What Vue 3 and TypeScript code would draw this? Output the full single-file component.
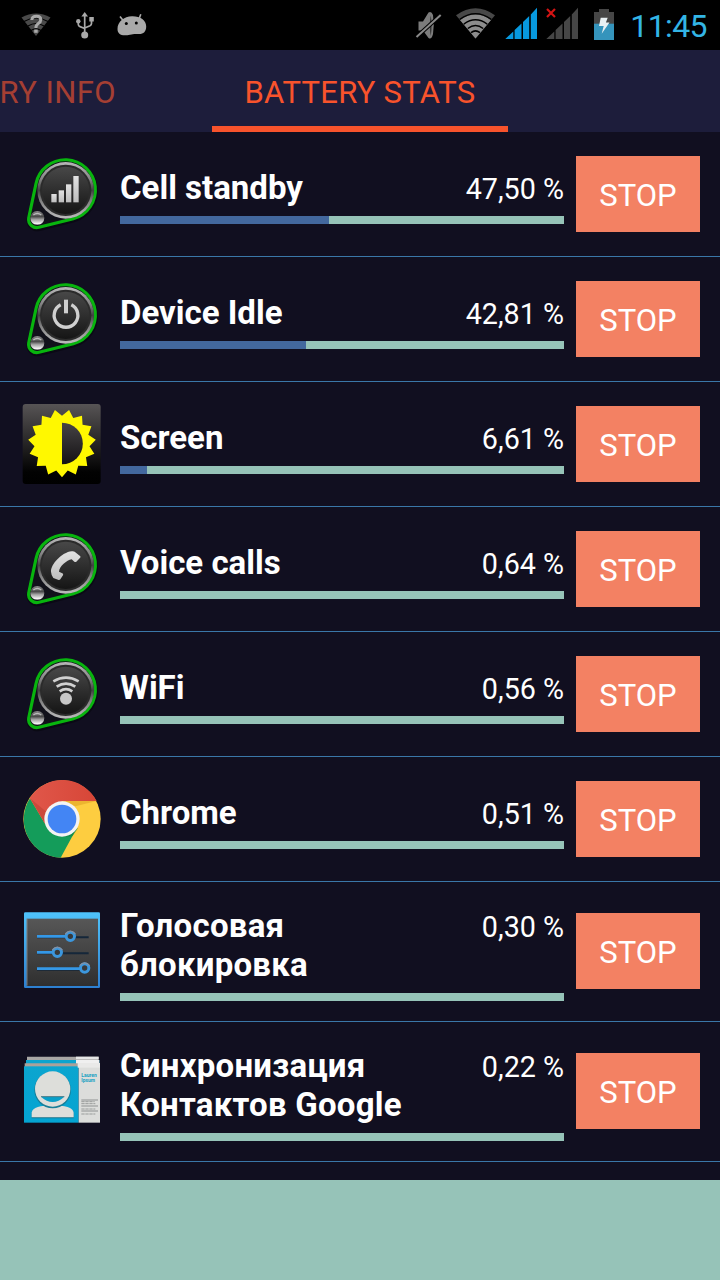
<script setup lang="ts">
type IconKind = 'cell' | 'idle' | 'screen' | 'voice' | 'wifi' | 'chrome' | 'settings' | 'contacts'

interface Stat {
  icon: IconKind
  name: string
  percent: number
}

const stats: Stat[] = [
  { icon: 'cell', name: 'Cell standby', percent: 47.5 },
  { icon: 'idle', name: 'Device Idle', percent: 42.81 },
  { icon: 'screen', name: 'Screen', percent: 6.61 },
  { icon: 'voice', name: 'Voice calls', percent: 0.64 },
  { icon: 'wifi', name: 'WiFi', percent: 0.56 },
  { icon: 'chrome', name: 'Chrome', percent: 0.51 },
  { icon: 'settings', name: 'Голосовая\nблокировка', percent: 0.3 },
  { icon: 'contacts', name: 'Синхронизация\nКонтактов Google', percent: 0.22 },
]

const knobIcons: IconKind[] = ['cell', 'idle', 'voice', 'wifi']

const format = (value: number): string => `${value.toFixed(2).replace('.', ',')} %`

// Fifteen-pointed sun with one ray pointing straight down.
const sunPoints: string = Array.from({ length: 30 }, (_, i) => {
  const angle = Math.PI / 2 + (i * Math.PI) / 15
  const radius = i % 2 === 0 ? 102 : 83
  return `${(120 + radius * Math.cos(angle)).toFixed(1)},${(118 + radius * Math.sin(angle)).toFixed(1)}`
}).join(' ')
</script>

<template>
  <div class="phone">
    <svg class="defs" width="0" height="0" aria-hidden="true">
      <defs>
        <linearGradient id="metal" x1="0" y1="0" x2="0" y2="1">
          <stop offset="0" stop-color="#b8b8b8" />
          <stop offset="0.3" stop-color="#858585" />
          <stop offset="0.5" stop-color="#424242" />
          <stop offset="0.68" stop-color="#808080" />
          <stop offset="1" stop-color="#bcbcbc" />
        </linearGradient>
        <linearGradient id="disc" x1="0" y1="0" x2="0" y2="1">
          <stop offset="0" stop-color="#484848" />
          <stop offset="1" stop-color="#151515" />
        </linearGradient>
        <linearGradient id="glyph" x1="0" y1="0" x2="0" y2="1">
          <stop offset="0" stop-color="#e2e2e2" />
          <stop offset="1" stop-color="#bdbdbd" />
        </linearGradient>
        <linearGradient id="bead" x1="0" y1="0" x2="0" y2="1">
          <stop offset="0" stop-color="#8a8a8a" />
          <stop offset="0.4" stop-color="#4a4a4a" />
          <stop offset="0.6" stop-color="#a0a0a0" />
          <stop offset="0.9" stop-color="#f2f2f2" />
          <stop offset="1" stop-color="#777" />
        </linearGradient>
        <linearGradient id="plate" x1="0" y1="0" x2="0" y2="1">
          <stop offset="0" stop-color="#575455" />
          <stop offset="0.85" stop-color="#020202" />
          <stop offset="1" stop-color="#000" />
        </linearGradient>
        <linearGradient id="moon" x1="0" y1="0" x2="0" y2="1">
          <stop offset="0" stop-color="#464345" />
          <stop offset="1" stop-color="#141214" />
        </linearGradient>
        <linearGradient id="frame" x1="0" y1="0" x2="0" y2="1">
          <stop offset="0" stop-color="#4fc3fb" />
          <stop offset="1" stop-color="#2d7fd0" />
        </linearGradient>
        <linearGradient id="panel" x1="0" y1="0" x2="0" y2="1">
          <stop offset="0" stop-color="#575757" />
          <stop offset="1" stop-color="#2f2f2f" />
        </linearGradient>
        <linearGradient id="card" x1="0" y1="0" x2="0" y2="1">
          <stop offset="0" stop-color="#0ba5cf" />
          <stop offset="1" stop-color="#04a4d2" />
        </linearGradient>
        <linearGradient id="red" x1="0" y1="0" x2="1" y2="0">
          <stop offset="0" stop-color="#e0574a" />
          <stop offset="1" stop-color="#d74637" />
        </linearGradient>
      </defs>
    </svg>

    <header class="status">
      <svg class="status-icons" width="720" height="50" viewBox="0 0 720 50">
        <!-- open wifi network -->
        <path d="M21.500 17.500Q36 9.500 50.500 17.500L36 36Z" fill="#4a4a4a" />
        <path d="M24 21.500Q36 14.500 48 21.500M28 26Q36 21 44 26M31 30.500Q36 27 41 30.500" fill="none" stroke="#000" stroke-width="1.200" />
        <path d="M31.800 20Q32 16.300 36.600 16.300Q40.800 16.300 40.800 19.800Q40.800 22 38.300 23.600Q35.900 25.200 35.900 28" fill="none" stroke="#aaa" stroke-width="3" />
        <rect x="34.200" y="29.600" width="3.500" height="3.200" fill="#aaa" />
        <!-- usb -->
        <g fill="#a9a9a9" stroke="none">
          <path d="M84.700 12L88 16.500H81.400Z" />
          <circle cx="84.700" cy="35" r="3.500" />
          <circle cx="78.300" cy="21.300" r="2.200" />
          <rect x="89.300" y="17" width="4.500" height="4.500" />
        </g>
        <path d="M84.700 15V34M78.300 21V24.500Q78.300 26 80 26.600L84.700 28.500M91.500 20V23.500Q91.500 25 90 25.700L84.700 28" fill="none" stroke="#a9a9a9" stroke-width="1.700" />
        <!-- android debugging -->
        <path d="M117.500 29C117.500 21.500 124 16.500 132 16.200C140 16 146.200 20 146.200 26.500C146.200 32 143 34.500 138 34C134.500 33.700 133 34 130 34.700C122 36.500 117.500 34.500 117.500 29Z" fill="#a9a9a9" />
        <path d="M120 16.500L123.500 21M140.800 14.200L139 19" stroke="#a9a9a9" stroke-width="1.600" />
        <circle cx="126.300" cy="23.600" r="1.500" fill="#000" />
        <circle cx="136.300" cy="23" r="1.500" fill="#000" />
        <!-- muted speaker -->
        <path d="M418.500 21.500H423L428.500 12.500Q431.500 11 433 15Q434.500 25 433 34Q431.500 40 428.500 38L423 30.500H418.500Z" fill="#7c7c7c" />
        <path d="M430.700 15.500Q428.800 25 430.700 36Q432.600 25 430.700 15.500Z" fill="#383838" />
        <path d="M416.500 37L440.700 15" stroke="#000" stroke-width="4" />
        <path d="M416.500 37L440.700 15" stroke="#8a8a8a" stroke-width="2" />
        <!-- wifi strength -->
        <path d="M456 15.200Q475.500 1.200 495 15.200L475.500 38.500Z" fill="#484848" />
        <path d="M460 20Q475.500 8.500 491 20L475.500 38.500Z" fill="#8c8c8c" />
        <path d="M459.800 19.300Q475.500 8.300 491.200 19.300M463.800 24.100Q475.500 15.500 487.200 24.100M467.800 28.500Q475.500 22.500 483.200 28.500M471 32.700Q475.500 29 480 32.700" fill="none" stroke="#000" stroke-width="1.500" />
        <!-- SIM 1 signal -->
        <path d="M505.300 39L513.300 31.400V39ZM514.600 39V30.100L521.500 23.600V39ZM523 39V22.100L529.200 16V39ZM530.800 39V14.500L537 7.800V39Z" fill="#0799df" />
        <!-- SIM 2 signal -->
        <path d="M546.300 39L554.300 31.400V39ZM555.600 39V30.100L562.500 23.600V39ZM564 39V22.100L570.200 16V39ZM571.800 39V14.500L578 7.800V39Z" fill="#464646" />
        <path d="M547 9L555 17M555 9L547 17" stroke="#d41414" stroke-width="2.200" />
        <!-- battery -->
        <path d="M594 12H599V9H609V12H614V24H594Z" fill="#464646" />
        <rect x="594" y="23.700" width="20" height="16.300" fill="#3594bc" />
        <path d="M600.700 17.700H607.700L605.900 22.600H609.500L601.700 33.700L603.700 26H599Z" fill="#e8f0f3" />
      </svg>
      <span class="clock">11:45</span>
    </header>

    <nav class="tabs">
      <div class="tab previous">RY INFO</div>
      <div class="tab current">BATTERY STATS</div>
    </nav>

    <main class="list">
      <section
        v-for="stat in stats"
        :key="stat.name"
        class="row"
        :class="{ tall: stat.name.includes('\n') }"
      >
        <svg class="icon" width="80" height="80" viewBox="0 0 240 240">
          <template v-if="knobIcons.includes(stat.icon)">
            <path d="M42 89A90 90 0 1 1 154 194L51 220A25 25 0 0 1 20 192Z" transform="translate(1 4)" fill="#06070d" stroke="#06070d" stroke-width="14" opacity="0.6" />
            <path d="M42 89A90 90 0 1 1 154 194L51 220A25 25 0 0 1 20 192Z" fill="#11111a" stroke="#08b40e" stroke-width="9.500" />
            <circle cx="131" cy="109" r="85" fill="url(#metal)" />
            <circle cx="131" cy="109" r="77" fill="#2b2b2b" />
            <circle cx="131" cy="109" r="71" fill="url(#disc)" />
            <circle cx="46" cy="192" r="21" fill="url(#bead)" />
            <path d="M34 183Q46 174 58 183" fill="none" stroke="#bbb" stroke-width="4" />
          </template>

          <g v-if="stat.icon === 'cell'" fill="url(#glyph)">
            <rect x="88" y="120" width="16" height="25" />
            <rect x="110" y="109" width="16" height="36" />
            <rect x="132" y="91" width="16" height="54" />
            <rect x="154" y="66" width="16" height="79" />
          </g>
          <g v-else-if="stat.icon === 'idle'" fill="none" stroke="#d0d0d0">
            <path d="M116 77.500A35.500 35.500 0 1 0 148 77.500" stroke-width="10" />
            <path d="M132 62V103" stroke-width="12" />
          </g>
          <path v-else-if="stat.icon === 'voice'" fill="url(#glyph)" d="M87 128C86 107 119 70 149 67Q155 66 158 68L175 82Q177 85 173 88L163 98Q160 100 157 98L149 91C134 94 112 112 111 128L121 133Q125 135 123 139L115 151Q112 154 108 152L94 147Q88 140 87 128Z" />
          <g v-else-if="stat.icon === 'wifi'" fill="none" stroke="#d0d0d0">
            <path d="M94 82Q132 60 170 82M104 98Q132 80 160 98M113 112Q132 99 151 112" stroke-width="8" />
            <circle cx="132" cy="134" r="18" fill="#c8c8c8" stroke="none" />
          </g>
          <template v-else-if="stat.icon === 'screen'">
            <rect x="2" y="0" width="234" height="240" rx="9" fill="url(#plate)" />
            <polygon :points="sunPoints" fill="#fff800" />
            <path d="M120 56A62 62 0 0 1 120 181Z" fill="url(#moon)" />
          </template>
          <template v-else-if="stat.icon === 'chrome'">
            <circle cx="120" cy="120" r="116" fill="#fdcd40" />
            <path d="M24 58A115 115 0 0 0 116 236L164 148L120 120L70 136Z" fill="#149c5a" />
            <path d="M23 57A116 116 0 0 1 224 66H120L70 136Z" fill="url(#red)" />
            <path d="M24 58L68 133L74 99Z" fill="#b53b2f" opacity="0.45" />
            <path d="M120 66H224L160 82Z" fill="#e4aa2a" opacity="0.7" />
            <path d="M120 174L169 146L151 172Z" fill="#0b8043" opacity="0.6" />
            <circle cx="120" cy="120" r="53" fill="#f3f3f3" />
            <circle cx="120" cy="120" r="43" fill="#4385f4" />
          </template>
          <template v-else-if="stat.icon === 'settings'">
            <rect x="6" y="4" width="228" height="227" rx="4" fill="url(#frame)" />
            <rect x="14" y="23" width="214" height="202" fill="url(#panel)" />
            <path d="M15 23V224" stroke="#9a9a9a" stroke-width="2" />
            <path d="M45 79H200M45 127H200M45 176H175" stroke="#15273a" stroke-width="6" />
            <path d="M45 76H132M45 124H92M45 173H175" stroke="#3598e6" stroke-width="8" />
            <g fill="#393939" stroke="#3c97dd" stroke-width="9">
              <circle cx="145" cy="76" r="12.500" />
              <circle cx="106" cy="124" r="12.500" />
              <circle cx="188" cy="171" r="12.500" />
            </g>
            <path d="M130 69Q145 52 160 69M91 117Q106 100 121 117M173 164Q188 147 203 164" fill="none" stroke="#8090a4" stroke-width="4" />
          </template>
          <template v-else-if="stat.icon === 'contacts'">
            <path d="M15 17H230V36H15Z" fill="#a9a7a5" />
            <path d="M162 17H230V25H162Z" fill="#e5e5e5" />
            <path d="M12 27H232V42H12Z" fill="#0ba4ce" />
            <path d="M162 27H232V42H162Z" fill="#f0f0f0" />
            <path d="M8 37H234V50H8Z" fill="#aaa19a" />
            <rect x="6" y="46" width="164" height="169" fill="url(#card)" />
            <rect x="170" y="46" width="64" height="169" fill="#dcdddb" />
            <path d="M167 36H234V50H167Z" fill="#e9e9e8" />
            <path d="M29 202V187C31 171 55 165 92 165S153 171 155 187V202Z" fill="#16738c" />
            <path d="M29 199V185C31 169 55 163 92 163S153 169 155 185V199Z" fill="#dddeda" />
            <circle cx="92" cy="117" r="55" fill="#187e98" />
            <circle cx="92" cy="114" r="53" fill="#dddeda" />
            <path d="M57 137H127Q110 153 92 153T57 137Z" fill="#079fc9" />
            <path d="M57 137H127" stroke="#477985" stroke-width="3" />
            <g fill="#149fc2" font-family="Roboto, sans-serif" font-size="16" font-weight="700">
              <text x="178" y="78" textLength="46" lengthAdjust="spacingAndGlyphs">Lauren</text>
              <text x="178" y="92" textLength="41" lengthAdjust="spacingAndGlyphs">Ipsum</text>
            </g>
            <path d="M178 147H228M178 165H228M178 180H228" stroke="#808382" stroke-width="2.500" />
            <path d="M178 152H218M178 158H220M178 174H220M178 189H220" stroke="#999c9b" stroke-width="3" stroke-dasharray="10 2" />
          </template>
        </svg>

        <div class="details">
          <div class="labels">
            <span class="name">{{ stat.name }}</span>
            <span class="percent">{{ format(stat.percent) }}</span>
          </div>
          <div class="bar">
            <div class="fill" :style="{ width: Math.floor(stat.percent) + '%' }"></div>
          </div>
        </div>

        <button class="stop" type="button">STOP</button>
      </section>
    </main>

    <footer class="banner"></footer>
  </div>
</template>

<style>
body {
  margin: 0;
  background: #110f20;
}
</style>

<style scoped>
.phone {
  display: flex;
  flex-direction: column;
  width: 720px;
  height: 1280px;
  overflow: hidden;
  background: #110f20;
  color: #fff;
  font-family: Roboto, "Noto Sans", sans-serif;
}

.defs {
  position: absolute;
}

.status {
  display: grid;
  flex: none;
  height: 50px;
  background: #000;
}

.status-icons,
.clock {
  grid-area: 1 / 1;
}

.clock {
  justify-self: end;
  padding-right: 13px;
  color: #33b5e5;
  font-size: 32px;
  letter-spacing: -0.6px;
  line-height: 52px;
}

.tabs {
  display: flex;
  flex: none;
  height: 82px;
  background: #1d1d3b;
}

.tab {
  box-sizing: border-box;
  display: flex;
  flex: none;
  height: 82px;
  color: #f8532c;
  font-size: 31px;
  letter-spacing: 0.25px;
  line-height: 85px;
  white-space: nowrap;
}

.previous {
  width: 212px;
  justify-content: flex-end;
  padding-right: 96px;
  color: #a53f33;
  letter-spacing: 0.4px;
}

.current {
  width: 296px;
  justify-content: center;
  border-bottom: 6px solid #f8532c;
}

.list {
  flex: none;
  height: 1048px;
  overflow: hidden;
}

.row {
  display: flex;
  align-items: center;
  min-height: 124px;
  padding: 0 20px 0 22px;
  border-bottom: 1px solid #3a77a8;
}

.icon {
  flex: none;
}

.details {
  flex: none;
  width: 444px;
  margin-left: 18px;
  padding: 24px 0 20px;
}

.labels {
  display: flex;
  align-items: baseline;
  justify-content: space-between;
}

.name {
  font-size: 33px;
  font-weight: 700;
  line-height: 39px;
  white-space: pre-line;
}

.percent {
  font-size: 28.7px;
  line-height: 34px;
}

.bar {
  height: 8px;
  margin-top: 9px;
  background: #96c3b8;
}

.fill {
  height: 8px;
  background: #43689e;
}

.stop {
  flex: none;
  width: 124px;
  height: 76px;
  margin: 0 0 0 12px;
  padding: 2px 0 0;
  border: 0;
  border-radius: 0;
  background: #f38163;
  color: #fff;
  font-family: inherit;
  font-size: 31px;
}

.tall .icon,
.tall .stop {
  margin-bottom: 1px;
}

.tall .name {
  letter-spacing: 0.25px;
}

.banner {
  flex: none;
  height: 100px;
  background: #96c3b8;
}
</style>
